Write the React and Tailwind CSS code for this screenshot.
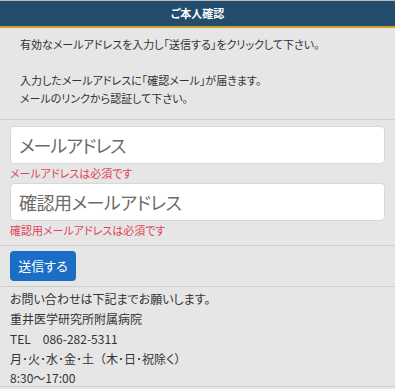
export default function App() {
    const font = { fontFamily: '"Noto Sans CJK JP", "Noto Sans", sans-serif' };

    return (
        <div className="w-[395px] h-[389px] bg-[#e6e6e6] text-[#333] overflow-hidden [font-feature-settings:'palt']" style={font}>
            {/* header */}
            <div className="h-[28px] border-t border-[#b8bcc0] border-b-2 border-b-[#c9a227] bg-[#234c6d] flex items-center justify-center">
                <span className="text-white text-[11px] font-bold leading-none">ご本人確認</span>
            </div>

            {/* intro */}
            <div className="px-[20px] pt-[7px] pb-[12px] text-[11px] leading-[18px] border-b border-[#cfcfcf]">
                <p>有効なメールアドレスを入力し「送信する」をクリックして下さい。</p>
                <p className="h-[18px]"></p>
                <p>入力したメールアドレスに「確認メール」が届きます。</p>
                <p>メールのリンクから認証して下さい。</p>
            </div>

            {/* form */}
            <div className="px-[10px] pt-[6px] pb-[6px] border-b border-[#cfcfcf]">
                <input
                    type="email"
                    placeholder="メールアドレス"
                    className="w-full h-[38px] bg-white border border-[#d6d9dc] rounded-[4px] px-[8px] text-[18px] tracking-[-1px] placeholder:text-[#6b6b6b] outline-none"
                    style={font}
                />
                <p className="text-[11px] leading-[19px] text-[#e0455a]">メールアドレスは必須です</p>
                <input
                    type="email"
                    placeholder="確認用メールアドレス"
                    className="w-full h-[38px] bg-white border border-[#d6d9dc] rounded-[4px] px-[8px] text-[18px] tracking-[-0.5px] placeholder:text-[#6b6b6b] outline-none"
                    style={font}
                />
                <p className="text-[11px] leading-[18px] text-[#e0455a]">確認用メールアドレスは必須です</p>
            </div>

            {/* submit */}
            <div className="px-[10px] py-[5px] border-b border-[#cfcfcf]">
                <button
                    type="button"
                    className="w-[66px] h-[30px] bg-[#1b6ec5] text-white text-[13px] rounded-[4px] flex items-center justify-center"
                    style={font}
                >
                    送信する
                </button>
            </div>

            {/* contact */}
            <div className="px-[10px] pt-[2px] text-[12px] leading-[20px] border-b border-[#cfcfcf]">
                <p>お問い合わせは下記までお願いします。</p>
                <p>重井医学研究所附属病院</p>
                <p>TEL　086-282-5311</p>
                <p>月･火･水･金･土<span className="[font-feature-settings:normal]">（</span>木･日･祝除く<span className="[font-feature-settings:normal]">）</span></p>
                <p className="leading-[17px]">8:30〜17:00</p>
            </div>
        </div>
    );
}
